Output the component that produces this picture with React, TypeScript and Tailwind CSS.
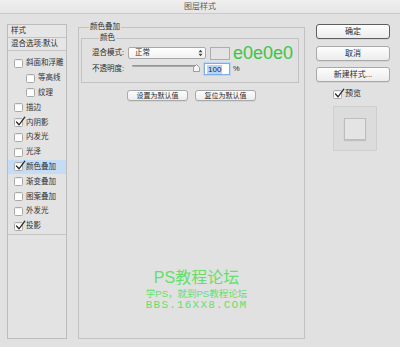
import React from "react";

const Check = ({ checked }: { checked?: boolean }) => (
  <div className="w-[9px] h-[9px] shrink-0 bg-white border border-[#a9a9a9] rounded-[1.5px] relative shadow-[inset_0_1px_1px_rgba(0,0,0,0.08)]">
    {checked && (
      <svg className="absolute left-[0px] top-[-3px]" width="11" height="11" viewBox="0 0 11 11">
        <path d="M1.5 6 L4 8.8 L9.8 1.2" fill="none" stroke="#2b2b2b" strokeWidth="1.3" strokeLinecap="round" strokeLinejoin="round" />
      </svg>
    )}
  </div>
);

const rows: { label: string; indent?: boolean; checked?: boolean; selected?: boolean }[] = [
  { label: "斜面和浮雕" },
  { label: "等高线", indent: true },
  { label: "纹理", indent: true },
  { label: "描边" },
  { label: "内阴影", checked: true },
  { label: "内发光" },
  { label: "光泽" },
  { label: "颜色叠加", checked: true, selected: true },
  { label: "渐变叠加" },
  { label: "图案叠加" },
  { label: "外发光" },
  { label: "投影", checked: true },
];

const Btn = ({ children, primary, className }: { children: React.ReactNode; primary?: boolean; className?: string }) => (
  <div
    className={
      "flex items-center justify-center rounded-[3px] bg-gradient-to-b from-[#fdfdfd] to-[#ececec] shadow-[0_1px_0_rgba(0,0,0,0.06)] border " +
      (primary ? "border-[#5e5e5e] " : "border-[#a9a9a9] ") +
      (className || "")
    }
  >
    {children}
  </div>
);

export default function App() {
  return (
    <div className="w-[400px] h-[347px] overflow-hidden bg-[#e1e1e1] text-[#2a2a2a] text-[7.5px] leading-[10px] font-['Liberation_Sans','Noto_Sans_CJK_SC',sans-serif]">
      {/* title bar */}
      <div className="h-[14px] bg-gradient-to-b from-[#efefef] to-[#e6e6e6] border-b border-[#cacaca] flex items-center justify-center text-[8px] text-[#5a5a5a]">
        图层样式
      </div>

      <div className="flex items-start pl-[7px] pt-[8px]">
        {/* sidebar */}
        <div className="mt-[2px] w-[60px] h-[315px] border border-[#bdbdbd] bg-[#e3e3e3] flex flex-col">
          <div className="h-[13px] border-b border-[#c4c4c4] bg-[#e6e6e6] flex items-center pl-[3px] text-[7.5px]">样式</div>
          <div className="h-[13px] border-b border-[#c4c4c4] bg-[#e6e6e6] flex items-center pl-[3px] text-[7.5px]">混合选项:默认</div>
          <div className="h-[5px]" />
          {rows.map((r) => (
            <div
              key={r.label}
              className={
                "h-[14.8px] flex items-center gap-[3px] " +
                (r.indent ? "pl-[18px] " : "pl-[6px] ") +
                (r.selected ? "bg-[#c4dcf6]" : "")
              }
            >
              <Check checked={r.checked} />
              <span className="text-[7.5px] text-[#333]">{r.label}</span>
            </div>
          ))}
          <div className="border-t border-[#c4c4c4]" />
        </div>

        {/* main */}
        <fieldset className="ml-[11px] w-[227px] h-[317px] border border-[#c2c2c2] p-0 m-0 flex flex-col">
          <legend className="ml-[10px] px-[1px] leading-[10px] text-[7.5px] text-[#333]">颜色叠加</legend>

          <fieldset className="mt-[1px] ml-[2px] w-[218px] h-[50px] border border-[#c2c2c2] p-0 m-0">
            <legend className="ml-[17px] px-[1px] leading-[10px] text-[7.5px] text-[#333]">颜色</legend>
            <div className="pl-[10px] pt-[4px] flex flex-col">
              <div className="flex items-center h-[12px]">
                <span className="w-[36px] text-[7.5px]">混合模式:</span>
                <div className="w-[78px] h-[12px] rounded-[2px] border border-[#a8a8a8] bg-gradient-to-b from-white to-[#f1f1f1] flex items-center justify-between pl-[6px] pr-[2px]">
                  <span className="text-[7.5px]">正常</span>
                  <svg width="5" height="8" viewBox="0 0 5 8">
                    <path d="M0.5 3.2 L2.5 0.8 L4.5 3.2 Z M0.5 4.8 L2.5 7.2 L4.5 4.8 Z" fill="#444" />
                  </svg>
                </div>
                <div className="ml-[4px] w-[20px] h-[13px] border border-[#adadad] bg-[#e3e3e3]" />
                <span className="ml-[3px] text-[18px] leading-[14px] text-[#3ac54b] font-['Liberation_Sans',sans-serif]">e0e0e0</span>
              </div>
              <div className="flex items-center h-[12px] mt-[4px]">
                <span className="w-[36px] text-[7.5px]">不透明度:</span>
                <div className="relative w-[72px] h-[12px]">
                  <div className="absolute left-[4px] top-[2px] w-[66px] h-[2px] bg-gradient-to-b from-[#8a8a8a] to-[#b5b5b5] rounded-[1px]" />
                  <svg className="absolute left-[65px] top-[1px]" width="7" height="8" viewBox="0 0 7 8">
                    <path d="M0.5 7.5 L0.5 3.5 L3.5 0.5 L6.5 3.5 L6.5 7.5 Z" fill="#f4f4f4" stroke="#8c8c8c" strokeWidth="0.8" />
                  </svg>
                </div>
                <div className="ml-[4px] w-[26px] h-[12px] border border-[#7eaee6] bg-white shadow-[0_0_0_1px_#b9d5f5] flex items-center pl-[2px]">
                  <span className="bg-[#b7d4f6] text-[8px] leading-[9px] px-[1px] font-['Liberation_Sans',sans-serif]">100</span>
                </div>
                <span className="ml-[3px] text-[7.5px] font-['Liberation_Sans',sans-serif]">%</span>
              </div>
            </div>
          </fieldset>

          <div className="mt-[7px] flex justify-center gap-[7px]">
            <Btn className="w-[61px] h-[11px] text-[7px]">设置为默认值</Btn>
            <Btn className="w-[61px] h-[11px] text-[7px]">复位为默认值</Btn>
          </div>

          <div className="mt-[168px] pl-[10px] flex flex-col items-center text-[#63e06a]">
            <div className="text-[16px] leading-[18px] font-['Liberation_Sans','Noto_Sans_CJK_SC',sans-serif]">PS教程论坛</div>
            <div className="text-[9.5px] leading-[11px] mt-[1px]">学PS，就到PS教程论坛</div>
            <div className="text-[11px] leading-[10px] mt-[1px] tracking-[1.2px] font-['Liberation_Mono',monospace]">BBS.16XX8.COM</div>
          </div>
        </fieldset>

        {/* right column */}
        <div className="ml-[11px] mt-[2px] w-[74px] flex flex-col">
          <Btn primary className="h-[15px] text-[8px]">确定</Btn>
          <Btn className="mt-[7px] h-[15px] text-[8px]">取消</Btn>
          <Btn className="mt-[6px] h-[15px] text-[8px]">新建样式...</Btn>
          <div className="mt-[8px] ml-[17px] flex items-center gap-[3px] h-[8px]">
            <Check checked />
            <span className="text-[8px]">预览</span>
          </div>
          <div className="mt-[8px] ml-[17px] w-[44px] h-[45px] border border-[#cfcfcf] bg-[#dcdcdc] flex items-center justify-center">
            <div className="w-[22px] h-[22px] border border-[#bdbdbd] bg-[#e4e4e4] shadow-[0_1px_1px_rgba(0,0,0,0.12)]" />
          </div>
        </div>
      </div>
    </div>
  );
}
